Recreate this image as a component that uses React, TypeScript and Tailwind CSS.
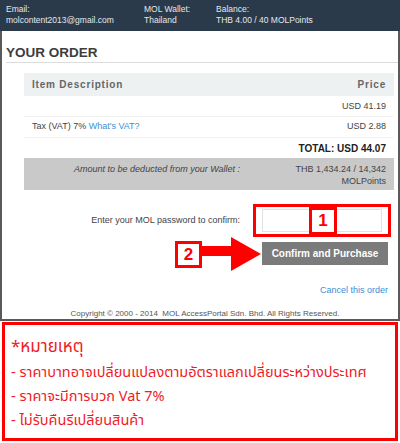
export default function App() {
  return (
    <div className="relative h-[443px] w-[400px] overflow-hidden bg-white font-['Liberation_Sans',Arial,sans-serif]">
      <div className="h-[321px] border-x-2 border-b-2 border-[#5a5a5a]">
        {/* account bar */}
        <div className="-mx-[2px] flex h-[31px] bg-[#2b3a4b] pl-[6px] pt-[4px] text-[8.5px] leading-[11px] text-[#e4e8ec]">
          <div className="w-[138px]">
            <div>Email:</div>
            <div>molcontent2013@gmail.com</div>
          </div>
          <div className="w-[72px]">
            <div>MOL Wallet:</div>
            <div>Thailand</div>
          </div>
          <div>
            <div>Balance:</div>
            <div>THB 4.00 / 40 MOLPoints</div>
          </div>
        </div>

        <div className="ml-[4px] h-[32px] border-b border-[#dcdcdc] pt-[14px] text-[13.5px] font-bold leading-[16px] text-[#3d3d3d]">
          YOUR ORDER
        </div>

        <div className="ml-[22px] mt-[10px] w-[370px] text-[9px] text-[#444]">
          <div className="flex h-[23px] items-center justify-between bg-[#eef1f1] px-[8px] text-[10px] font-bold tracking-[0.8px] text-[#666]">
            <span>Item Description</span>
            <span>Price</span>
          </div>
          <div className="flex h-[21px] items-center justify-end border-b border-[#f2f2f2] px-[8px] pt-[1px]">USD 41.19</div>
          <div className="flex h-[21px] items-center justify-between border-b border-[#f2f2f2] px-[8px]">
            <span>
              Tax (VAT) 7% <span className="text-[#3a8fd6]">What's VAT?</span>
            </span>
            <span>USD 2.88</span>
          </div>
          <div className="flex h-[20px] items-center justify-end px-[8px] text-[10px] font-bold text-[#222]">
            TOTAL: USD 44.07
          </div>
          <div className="flex h-[32px] items-start bg-[#c9c9c9] px-[8px] pt-[5px] leading-[12px] text-[#444]">
            <div className="w-[208px] text-right italic">Amount to be deducted from your Wallet :</div>
            <div className="flex-1 text-right">
              THB 1,434.24 / 14,342
              <br />
              MOLPoints
            </div>
          </div>
        </div>

        {/* confirm */}
        <div className="mt-[14px] flex items-center">
          <div className="w-[238px] text-right text-[9px] text-[#444]">Enter your MOL password to confirm:</div>
          <div className="relative ml-[13px] h-[33px] w-[138px] border-[3px] border-[#ff0000] px-[6px] pt-[2px]">
            <div className="h-[23px] w-[120px] border border-[#e2e2e2] bg-white" />
            <div className="absolute left-[53px] top-[0px] flex h-[28px] w-[28px] items-center justify-center border-[3px] border-[#ff0000] bg-white text-[17px] font-bold text-[#ff0000]">
              1
            </div>
          </div>
        </div>
        <div className="relative mt-[5px] flex justify-end pr-[10px]">
          <button className="h-[23px] w-[126px] bg-[#7b7b7b] text-[10px] font-bold text-white">Confirm and Purchase</button>
          <div className="absolute left-[173px] top-[-1px] flex h-[27px] w-[27px] items-center justify-center border-[3px] border-[#ff0000] bg-white text-[17px] font-bold text-[#ff0000]">
            2
          </div>
          <svg className="absolute left-[200px] top-[-5px]" width="60" height="34" viewBox="0 0 60 34">
            <rect x="0" y="9" width="31" height="10" fill="#ff0000" />
            <polygon points="29,0 59,17 29,34" fill="#ff0000" />
          </svg>
        </div>

        <div className="mt-[19px] pr-[10px] text-right text-[9px] text-[#3a8fd6]">Cancel this order</div>
        <div className="mt-[10px] pl-[10px] text-center text-[8px] text-[#555]">
          Copyright © 2000 - 2014&nbsp; MOL AccessPortal Sdn. Bhd. All Rights Reserved.
        </div>
      </div>

      {/* note */}
      <div className="ml-[2px] mt-[1px] h-[119px] w-[396px] border-[3px] border-[#ff0000] px-[6px] pt-[8px] font-['Noto_Sans_Thai','Noto_Sans',sans-serif] font-normal text-[#ee1c25]">
        <div className="text-[17px] leading-[28px]">*หมายเหตุ</div>
        <div className="text-[14.5px] leading-[24px]">- ราคาบาทอาจเปลี่ยนแปลงตามอัตราแลกเปลี่ยนระหว่างประเทศ</div>
        <div className="text-[14.5px] leading-[24px]">- ราคาจะมีการบวก Vat 7%</div>
        <div className="text-[14.5px] leading-[24px]">- ไม่รับคืนรีเปลี่ยนสินค้า</div>
      </div>
    </div>
  );
}
